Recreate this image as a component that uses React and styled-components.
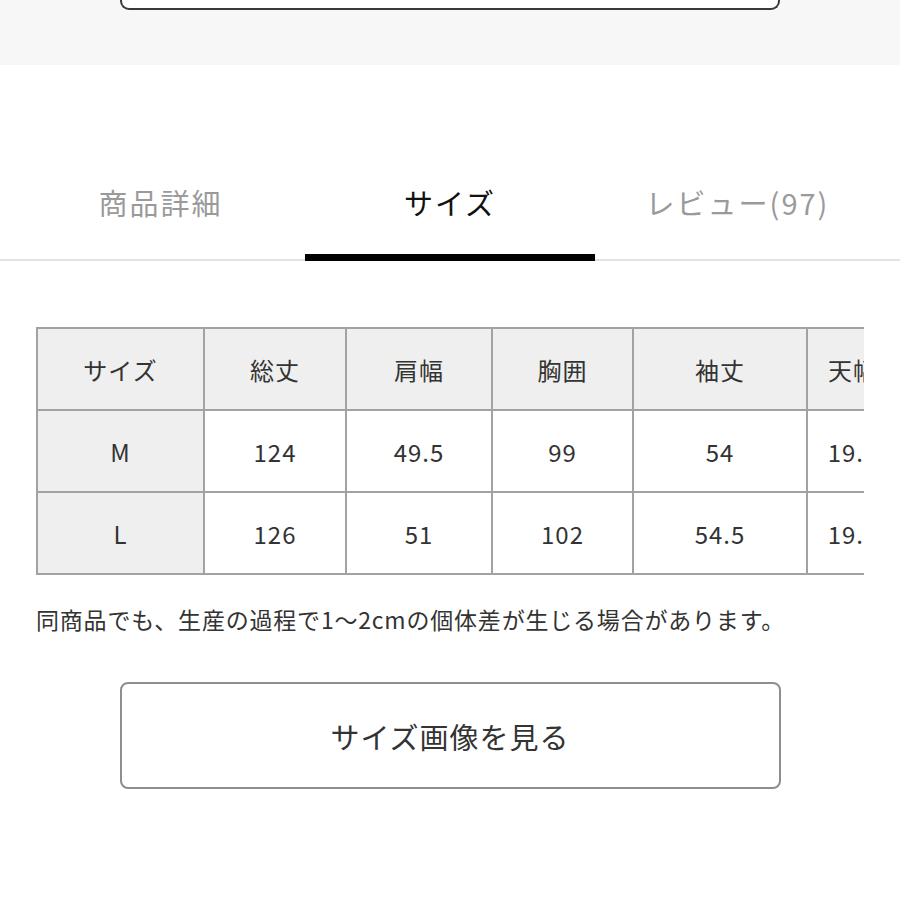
import React from "react";
import styled, { createGlobalStyle } from "styled-components";

const GlobalStyle = createGlobalStyle`
  body {
    margin: 0;
    background: #ffffff;
    font-family: "Noto Sans CJK JP", "Noto Sans", sans-serif;
    color: #333333;
  }
`;

const TopBand = styled.div`
  height: 65px;
  background: #f7f7f7;
  display: flex;
  justify-content: center;
`;

const CutButton = styled.div`
  width: 656px;
  height: 8px;
  background: #ffffff;
  border: 2px solid #3a3a3a;
  border-top: none;
  border-radius: 0 0 9px 9px;
`;

const Tabs = styled.div`
  display: grid;
  grid-template-columns: 305px 290px 1fr;
  padding-top: 106px;
  box-shadow: inset 0 -2px 0 #e2e2e2;
`;

const Tab = styled.div`
  height: 62px;
  padding-bottom: 21px;
  padding-left: ${(p) => p.$left || 0}px;
  padding-right: ${(p) => p.$right || 0}px;
  display: flex;
  align-items: center;
  justify-content: center;
  font-size: 29px;
  letter-spacing: 2px;
  color: ${(p) => (p.$active ? "#111111" : "#9a9a9a")};
  border-bottom: 7px solid ${(p) => (p.$active ? "#000000" : "transparent")};
`;

const TableWrap = styled.div`
  margin: 66px 36px 0;
  overflow: hidden;
`;

const SizeTable = styled.table`
  border-collapse: collapse;
  table-layout: fixed;
  width: 862px;
`;

const Cell = styled.td`
  border: 2px solid #a2a2a2;
  height: 80px;
  padding: 0;
  text-align: center;
  font-size: 24px;
  letter-spacing: 1px;
  color: #333333;
  background: ${(p) => (p.$head ? "#efefef" : "#ffffff")};
  white-space: nowrap;
`;

const Note = styled.p`
  margin: 28px 36px 0;
  font-size: 23px;
  letter-spacing: 0.8px;
  line-height: 32px;
  color: #333333;
  white-space: nowrap;
`;

const ImageButton = styled.button`
  display: flex;
  align-items: center;
  justify-content: center;
  margin: 47px auto 0;
  width: 661px;
  height: 107px;
  background: #ffffff;
  border: 2px solid #8e8e8e;
  border-radius: 8px;
  font-family: inherit;
  font-size: 29px;
  letter-spacing: 1px;
  color: #333333;
`;

const widths = [167, 142, 146, 141, 174, 92];
const header = ["サイズ", "総丈", "肩幅", "胸囲", "袖丈", "天幅"];
const rows = [
  ["M", "124", "49.5", "99", "54", "19.5"],
  ["L", "126", "51", "102", "54.5", "19.5"],
];

export default function App() {
  return (
    <>
      <GlobalStyle />
      <TopBand>
        <CutButton />
      </TopBand>
      <Tabs>
        <Tab $left={16}>商品詳細</Tab>
        <Tab $active>サイズ</Tab>
        <Tab $right={20}>レビュー(97)</Tab>
      </Tabs>
      <TableWrap>
        <SizeTable>
          <colgroup>
            {widths.map((w, i) => (
              <col key={i} style={{ width: w }} />
            ))}
          </colgroup>
          <tbody>
            <tr>
              {header.map((h) => (
                <Cell key={h} $head>
                  {h}
                </Cell>
              ))}
            </tr>
            {rows.map((r) => (
              <tr key={r[0]}>
                {r.map((v, i) => (
                  <Cell key={i} $head={i === 0}>
                    {v}
                  </Cell>
                ))}
              </tr>
            ))}
          </tbody>
        </SizeTable>
      </TableWrap>
      <Note>同商品でも、生産の過程で1～2cmの個体差が生じる場合があります。</Note>
      <ImageButton>サイズ画像を見る</ImageButton>
    </>
  );
}
